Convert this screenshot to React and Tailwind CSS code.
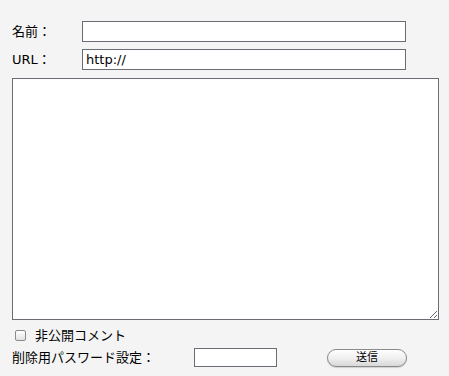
import React from "react";

export default function App() {
  const jp = { fontFamily: '"DejaVu Sans", "Noto Sans CJK JP", sans-serif' };

  return (
    <div
      className="w-[449px] h-[376px] bg-[#f4f4f4] text-[13px] text-black pl-[12px] pt-[21px]"
      style={jp}
    >
      {/* Name */}
      <div className="flex items-center h-[21px]">
        <label className="w-[70px] leading-none">名前：</label>
        <input
          type="text"
          className="w-[324px] h-[21px] bg-white border border-[#6c6c74] px-[3px] text-[13px] outline-none"
        />
      </div>

      {/* URL */}
      <div className="flex items-center h-[21px] mt-[7px]">
        <label className="w-[70px] leading-none">URL：</label>
        <input
          type="text"
          defaultValue="http://"
          className="w-[324px] h-[21px] bg-white border border-[#6c6c74] px-[3px] text-[13px] outline-none"
        />
      </div>

      {/* Comment */}
      <textarea className="block mt-[8px] w-[427px] h-[242px] bg-white border border-[#6c6c74] outline-none resize" />

      {/* Private */}
      <div className="flex items-center mt-[9px] h-[13px]">
        <span className="ml-[3px] w-[11px] h-[11px] rounded-[2px] border border-[#8a8a8a] bg-gradient-to-b from-white to-[#e2e2e2]" />
        <span className="ml-[9px] leading-none">非公開コメント</span>
      </div>

      {/* Password + submit */}
      <div className="flex items-center mt-[6px] h-[19px]">
        <label className="w-[182px] leading-none">削除用パスワード設定：</label>
        <input
          type="password"
          className="w-[83px] h-[19px] bg-white border border-[#6c6c74] outline-none"
        />
        <button className="ml-[50px] w-[80px] h-[18px] rounded-full border border-[#8a8a8a] bg-gradient-to-b from-white via-[#f0f0f0] to-[#d8d8d8] text-[11px] leading-none shadow-[0_1px_1px_rgba(0,0,0,0.15)]">
          送信
        </button>
      </div>
    </div>
  );
}
